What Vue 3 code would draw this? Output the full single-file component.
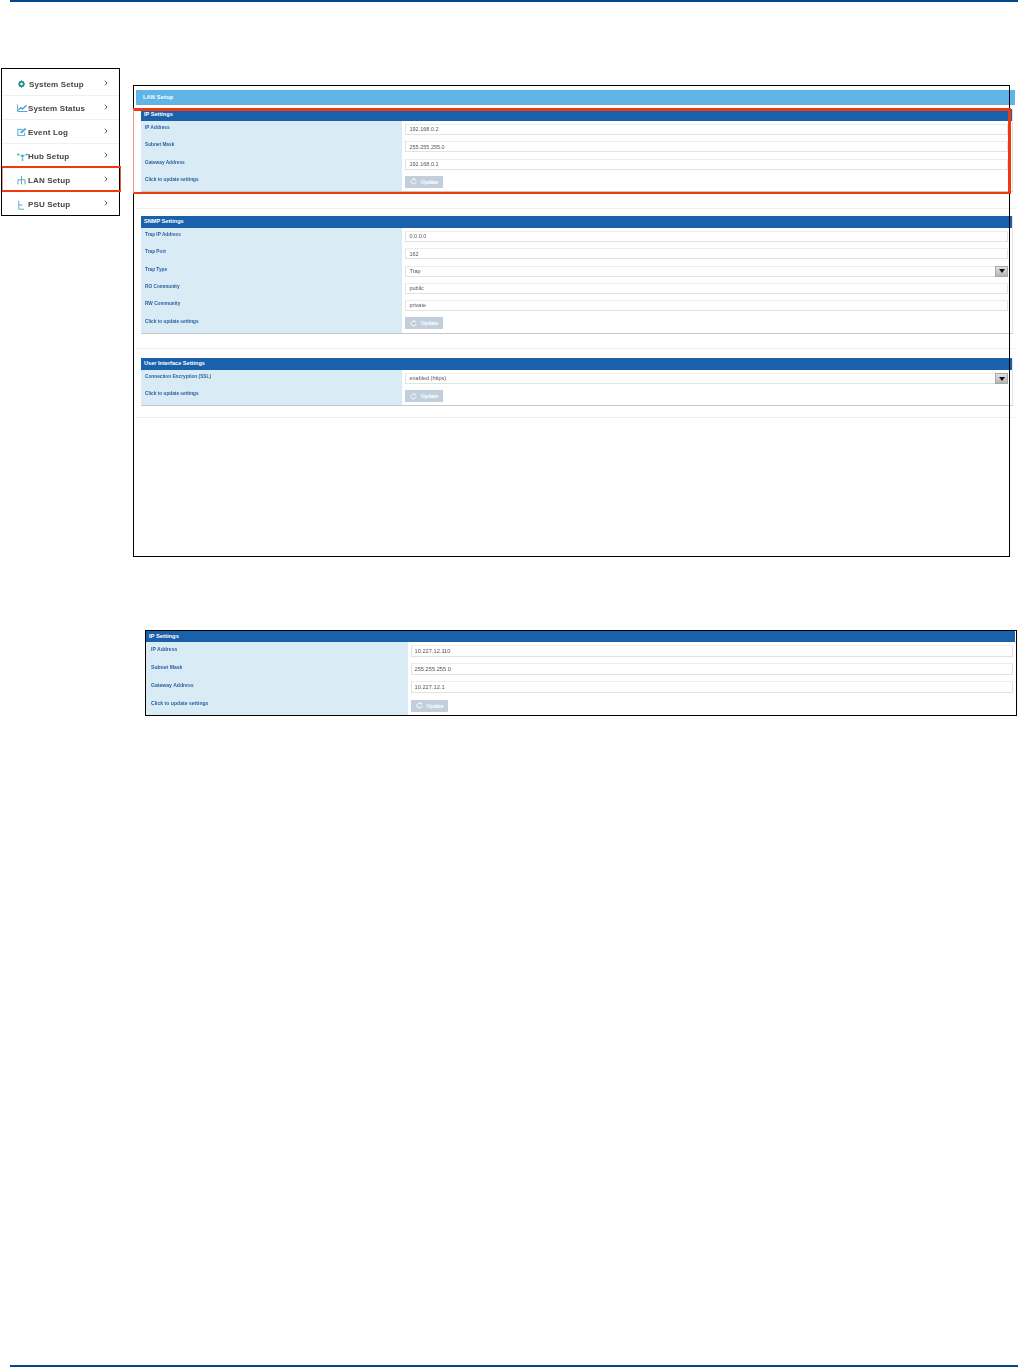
<script setup>
const nav = [
  { name: 'System Setup', icon: 'gear' },
  { name: 'System Status', icon: 'chart' },
  { name: 'Event Log', icon: 'edit' },
  { name: 'Hub Setup', icon: 'hub' },
  { name: 'LAN Setup', icon: 'lan', active: true },
  { name: 'PSU Setup', icon: 'psu' }
]
const sections = [
  {
    id: 'ip', title: 'IP Settings',
    rows: [
      { label: 'IP Address', value: '192.168.0.2' },
      { label: 'Subnet Mask', value: '255.255.255.0' },
      { label: 'Gateway Address', value: '192.168.0.1' }
    ]
  },
  {
    id: 'snmp', title: 'SNMP Settings',
    rows: [
      { label: 'Trap IP Address', value: '0.0.0.0' },
      { label: 'Trap Port', value: '162' },
      { label: 'Trap Type', value: 'Trap', select: true },
      { label: 'RO Community', value: 'public' },
      { label: 'RW Community', value: 'private' }
    ]
  },
  {
    id: 'ui', title: 'User Interface Settings',
    rows: [{ label: 'Connection Encryption (SSL)', value: 'enabled (https)', select: true }]
  }
]
const detail = {
  title: 'IP Settings',
  rows: [
    { label: 'IP Address', value: '10.227.12.110' },
    { label: 'Subnet Mask', value: '255.255.255.0' },
    { label: 'Gateway Address', value: '10.227.12.1' }
  ]
}
</script>

<template>
  <div class="page">
    <div class="rule"></div>

    <div class="top">
      <ul class="nav">
        <li v-for="item in nav" :key="item.name" class="nav-item" :class="{ active: item.active }">
          <svg class="nav-icon" :class="item.icon" viewBox="0 0 11 10" fill="none">
            <template v-if="item.icon === 'gear'">
              <circle cx="4" cy="5" r="2.2" stroke="#1d8f8f" stroke-width="1.7" />
              <path d="M4 1.2v1.2M4 7.6v1.2M.6 5h1.2M6.2 5h1.2M1.6 2.6l.8.8M5.6 6.6l.8.8M1.6 7.4l.8-.8M5.6 3.4l.8-.8" stroke="#1d8f8f" stroke-width="1.1" />
            </template>
            <template v-else-if="item.icon === 'chart'">
              <path d="M.6 1.5v7h9.9" stroke="#5aa9d8" stroke-width="1" />
              <path d="M1.5 7.2l2.4-2.6 1.6 1.3L9.6 2.2" stroke="#3a93c8" stroke-width="1.2" />
            </template>
            <template v-else-if="item.icon === 'edit'">
              <path d="M7.6 5.5v3H.8V2.4h4.6" stroke="#63b6dc" stroke-width="1.1" />
              <path d="M3.2 6.4l.5-1.9L8 .9l1.4 1.4L5 6z" fill="#4aa9d0" />
            </template>
            <template v-else-if="item.icon === 'hub'">
              <circle cx="5.5" cy="5" r="1.5" fill="#3fa7c4" />
              <path d="M5.5 5v3.5M5.5 5L2 3.6M5.5 5L9 3.6" stroke="#74bfd6" stroke-width="0.8" />
              <circle cx="1.2" cy="3.4" r="1" fill="#3fa7c4" />
              <circle cx="9.8" cy="3.4" r="1" fill="#3fa7c4" />
              <circle cx="5.5" cy="9" r="0.9" fill="#3fa7c4" />
            </template>
            <template v-else-if="item.icon === 'lan'">
              <path d="M4.5 .8v4M1 9.4V4.8h7v4.6M4.5 4.8v4.6" stroke="#4f9fb8" stroke-width="0.9" />
            </template>
            <template v-else>
              <path d="M1.8 .8v8.4h5.4M1.8 5h3.6" stroke="#4aa9c0" stroke-width="0.9" />
            </template>
          </svg>
          <span class="nav-name">{{ item.name }}</span>
          <svg class="chev" viewBox="0 0 4 6" fill="none" stroke="#444" stroke-width="0.9">
            <path d="M1 .7L3 3 1 5.3" />
          </svg>
        </li>
      </ul>

      <div class="shot">
        <div class="title-bar">LAN Setup</div>
        <section v-for="s in sections" :key="s.id" class="sec" :class="'sec-' + s.id">
          <div class="panel">
            <div class="panel-head">{{ s.title }}</div>
            <div class="panel-body">
              <template v-for="r in s.rows" :key="r.label">
                <div class="label">{{ r.label }}</div>
                <div class="field-cell">
                  <div class="field">
                    <span class="val">{{ r.value }}</span>
                    <span v-if="r.select" class="arrow"><i></i></span>
                  </div>
                </div>
              </template>
              <div class="label">Click to update settings</div>
              <div class="field-cell last">
                <button class="update" type="button">
                  <svg viewBox="0 0 8 8" fill="none" stroke="#fff" stroke-width="1.1"><path d="M6.8 4A2.8 2.8 0 1 1 5.6 1.7" /><path d="M5 .4l1.3 1.5-1.7.6" stroke-width="0.8" /></svg>
                  Update
                </button>
              </div>
            </div>
          </div>
        </section>
        <div class="callout"></div>
      </div>
    </div>

    <div class="detail">
      <div class="panel-head">{{ detail.title }}</div>
      <div class="panel-body">
        <template v-for="r in detail.rows" :key="r.label">
          <div class="label">{{ r.label }}</div>
          <div class="field-cell">
            <div class="field"><span class="val">{{ r.value }}</span></div>
          </div>
        </template>
        <div class="label">Click to update settings</div>
        <div class="field-cell last">
          <button class="update" type="button">
            <svg viewBox="0 0 8 8" fill="none" stroke="#fff" stroke-width="1.1"><path d="M6.8 4A2.8 2.8 0 1 1 5.6 1.7" /><path d="M5 .4l1.3 1.5-1.7.6" stroke-width="0.8" /></svg>
            Update
          </button>
        </div>
      </div>
    </div>

    <div class="rule bottom"></div>
  </div>
</template>

<style>
html, body { margin: 0; background: #fff; }
</style>

<style scoped>
.page {
  width: 1018px;
  height: 1367px;
  display: flex;
  flex-direction: column;
  overflow: hidden;
  font-family: "Liberation Sans", Arial, sans-serif;
  background: #fff;
}
.rule {
  height: 2px;
  margin-left: 10px;
  background: #00468c;
  flex: none;
}
.rule.bottom { margin-top: auto; }

.top { display: flex; align-items: flex-start; }

.nav {
  list-style: none;
  box-sizing: border-box;
  width: 119px;
  height: 148px;
  margin: 66px 0 0 1px;
  padding: 3px 0 0;
  border: 1px solid #000;
  flex: none;
}
.nav-item {
  position: relative;
  box-sizing: border-box;
  height: 24px;
  display: flex;
  align-items: center;
  padding: 1px 11px 0 15px;
  border-bottom: 1px solid #f0f0f0;
  font-size: 8px;
  font-weight: bold;
  letter-spacing: 0.15px;
  color: #454545;
}
.nav-item:last-child { border-bottom: 0; }
.nav-item.active::after {
  content: "";
  position: absolute;
  left: 0;
  right: -2px;
  top: -2px;
  bottom: -1px;
  border: solid #ee3a10;
  border-width: 2px 0;
  box-shadow: inset 1px 0 0 #f29a80, inset -1px 0 0 #ee5a30;
}
.nav-icon { width: 11px; height: 10px; flex: none; filter: blur(0.25px); }
.nav-icon.gear { width: 12px; }
.nav-name { flex: 1; filter: blur(0.3px); }
.chev { width: 4px; height: 6px; margin-top: -3px; flex: none; }

.shot {
  position: relative;
  box-sizing: border-box;
  width: 877px;
  height: 472px;
  margin: 83px 0 0 13px;
  padding: 5px 0 0 3px;
  flex: none;
}
.shot::after {
  content: "";
  position: absolute;
  inset: 0;
  border: 1px solid #000;
  pointer-events: none;
}
.callout {
  position: absolute;
  z-index: 1;
  left: 0;
  top: 23px;
  box-sizing: border-box;
  width: 878px;
  height: 86px;
  border: solid #ee3a10;
  border-width: 3px 3px 2px 1px;
  border-left-color: #f29a80;
}
.title-bar {
  box-sizing: border-box;
  width: 879px;
  height: 15px;
  padding: 4px 0 0 7px;
  background: #5fb5e6;
  border-bottom: 1px solid #7aa9c6;
  color: #fff;
  font-size: 5.6px;
  font-weight: bold;
  letter-spacing: 0.2px;
}
.sec {
  box-sizing: border-box;
  width: 879px;
  padding: 0 2px 0 5px;
  border-bottom: 1px solid #f0f0f0;
}
.sec-ip { margin-top: 4px; padding-bottom: 15.5px; }
.sec-snmp { margin-top: 7px; padding-bottom: 14px; }
.sec-ui { margin-top: 9px; padding-bottom: 11px; }

.panel {
  box-sizing: border-box;
  width: 872px;
  border-bottom: 1px solid #c8c8c8;
  border-right: 1px solid #e4e4e4;
}
.panel-head {
  box-sizing: border-box;
  height: 12px;
  padding: 2px 0 0 3px;
  background: #1a61ac;
  color: #fff;
  font-size: 5.6px;
  font-weight: bold;
  white-space: nowrap;
}
.panel-body {
  display: grid;
  grid-template-columns: 261px 1fr;
  align-content: start;
  padding: 3px 0 3.6px;
  background: linear-gradient(to right, #d9ecf6 261px, #fff 261px);
}
.sec-snmp .panel-body { padding: 3px 0 3.5px; }
.sec-ui .panel-body { padding: 3px 0 2.7px; }
.label {
  padding: 1.2px 0 0 4px;
  color: #2b5e9e;
  font-size: 4.75px;
  font-weight: bold;
  line-height: 6px;
  white-space: nowrap;
  filter: blur(0.25px);
}
.field-cell { padding: 0 4px 6.3px 3px; }
.field-cell.last { padding-bottom: 0; }
.field {
  box-sizing: border-box;
  height: 11px;
  display: flex;
  align-items: center;
  justify-content: space-between;
  padding: 0 0 0.5px 3.5px;
  background: #fff;
  border: 1px solid #e2e2e2;
  border-top-color: #ececec;
  border-radius: 1px;
  color: #555;
  font-size: 5.5px;
  white-space: nowrap;
}
.val { filter: blur(0.25px); }
.arrow {
  box-sizing: border-box;
  width: 13px;
  height: 11px;
  margin: 0 -1px -1px 0;
  display: flex;
  align-items: center;
  justify-content: center;
  background: linear-gradient(#e2e2e2, #b4b4b4);
  border: 1px solid #a8a8a8;
}
.arrow i {
  width: 0;
  height: 0;
  border-left: 3.5px solid transparent;
  border-right: 3.5px solid transparent;
  border-top: 4px solid #111;
}
.update {
  display: flex;
  align-items: center;
  justify-content: center;
  gap: 4px;
  box-sizing: border-box;
  width: 38px;
  height: 12px;
  padding: 0;
  border: 0;
  background: #c1cedc;
  color: #fff;
  font-family: inherit;
  font-size: 5px;
  font-weight: bold;
}
.update svg { width: 7px; height: 7px; }

.detail {
  position: relative;
  box-sizing: border-box;
  width: 872px;
  height: 86px;
  margin: 73px 0 0 145px;
  padding: 0 1px 0 0;
  border: 1px solid #000;
  flex: none;
}
.detail .panel-head {
  height: 11px;
  padding: 1.5px 0 0 3px;
  font-size: 5.8px;
}
.detail .panel-body {
  grid-template-columns: 262px 1fr;
  background: linear-gradient(to right, #d9ecf6 262px, #fff 262px);
  padding: 3px 0 0;
  height: 73px;
  box-sizing: border-box;
}
.detail .label {
  padding: 0.7px 0 0 5px;
  font-size: 5.1px;
  line-height: 7px;
}
.detail .field-cell { padding: 0 2px 6.2px 3px; }
.detail .field-cell.last { padding-bottom: 0; }
.detail .field { height: 12px; font-size: 5.7px; padding-left: 2.5px; }
.detail .update { width: 37px; }
</style>
